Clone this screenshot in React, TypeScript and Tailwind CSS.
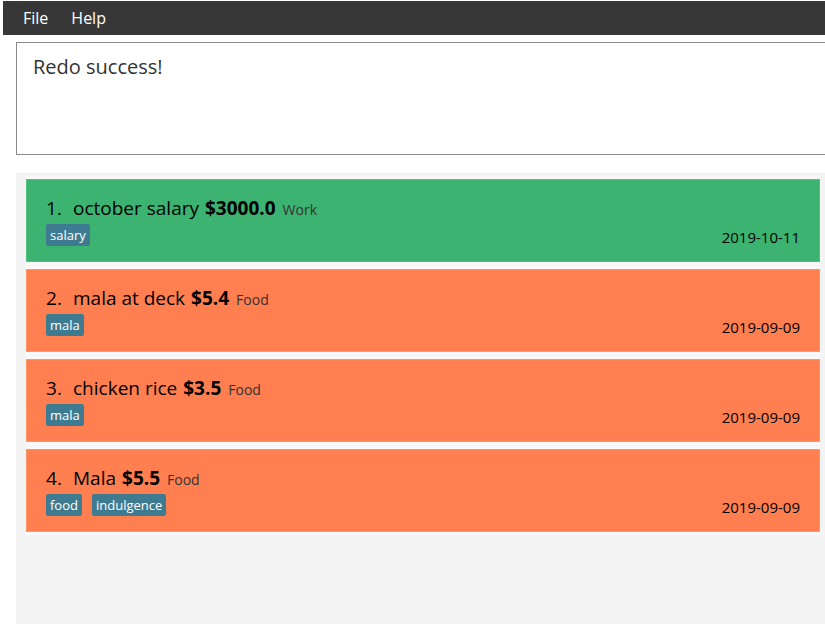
import React from "react";

type Entry = {
  index: number;
  desc: string;
  amount: string;
  category: string;
  tags: string[];
  date: string;
  income: boolean;
};

const entries: Entry[] = [
  { index: 1, desc: "october salary", amount: "$3000.0", category: "Work", tags: ["salary"], date: "2019-10-11", income: true },
  { index: 2, desc: "mala at deck", amount: "$5.4", category: "Food", tags: ["mala"], date: "2019-09-09", income: false },
  { index: 3, desc: "chicken rice", amount: "$3.5", category: "Food", tags: ["mala"], date: "2019-09-09", income: false },
  { index: 4, desc: "Mala", amount: "$5.5", category: "Food", tags: ["food", "indulgence"], date: "2019-09-09", income: false },
];

const EntryCard = ({ entry }: { entry: Entry }) => {
  return (
    <div className="bg-[#f9f9f9] py-[3px]">
      <div
        className={
          entry.income
            ? "flex h-[83px] flex-col border border-[#52c07e] bg-[#3cb371] pl-[19px] pr-[19px] pt-[16px]"
            : "flex h-[83px] flex-col border border-[#ff9466] bg-[#ff7f50] pl-[19px] pr-[19px] pt-[16px]"
        }
      >
        <div className="flex items-baseline text-black">
          <span className="w-[27px] text-[19px] leading-[24px]">{entry.index}.</span>
          <span className="text-[19px] leading-[24px]">{entry.desc}</span>
          <span className="ml-[6px] text-[19px] font-bold leading-[24px]">{entry.amount}</span>
          <span className="ml-[7px] text-[14px] text-[#333]">{entry.category}</span>
        </div>
        <div className="mt-[2px] flex items-center">
          <div className="flex flex-1 gap-[10px]">
            {entry.tags.map((t) => (
              <span
                key={t}
                className="rounded-[2px] bg-[#3e7b91] px-[4px] py-px text-[13px] leading-[20px] text-white"
              >
                {t}
              </span>
            ))}
          </div>
          <span className="mt-[4px] text-[15px] text-black">{entry.date}</span>
        </div>
      </div>
    </div>
  );
};

export default function App() {
  return (
    <div
      className="flex h-[624px] w-[825px] flex-col overflow-hidden bg-white"
      style={{ fontFamily: '"Open Sans", "Noto Sans", sans-serif' }}
    >
      {/* Menu bar */}
      <div className="ml-[3px] mt-px flex h-[34px] items-center gap-[23px] bg-[#373737] pl-[20px] text-[16px] text-white">
        <span>File</span>
        <span>Help</span>
      </div>

      {/* Result display */}
      <div className="ml-[16px] mt-[7px] h-[113px] w-[820px] border border-[#8a8a8a] bg-white px-[16px] pt-[9px] text-[20px] text-[#333]">
        Redo success!
      </div>

      {/* Entry list */}
      <div className="ml-[16px] mt-[18px] flex-1 border-t border-[#ececec] bg-[#f4f4f4] pl-[10px] pr-[5px] pt-[2px]">
        <div className="flex flex-col gap-px">
          {entries.map((e) => (
            <EntryCard key={e.index} entry={e} />
          ))}
        </div>
      </div>
    </div>
  );
}
